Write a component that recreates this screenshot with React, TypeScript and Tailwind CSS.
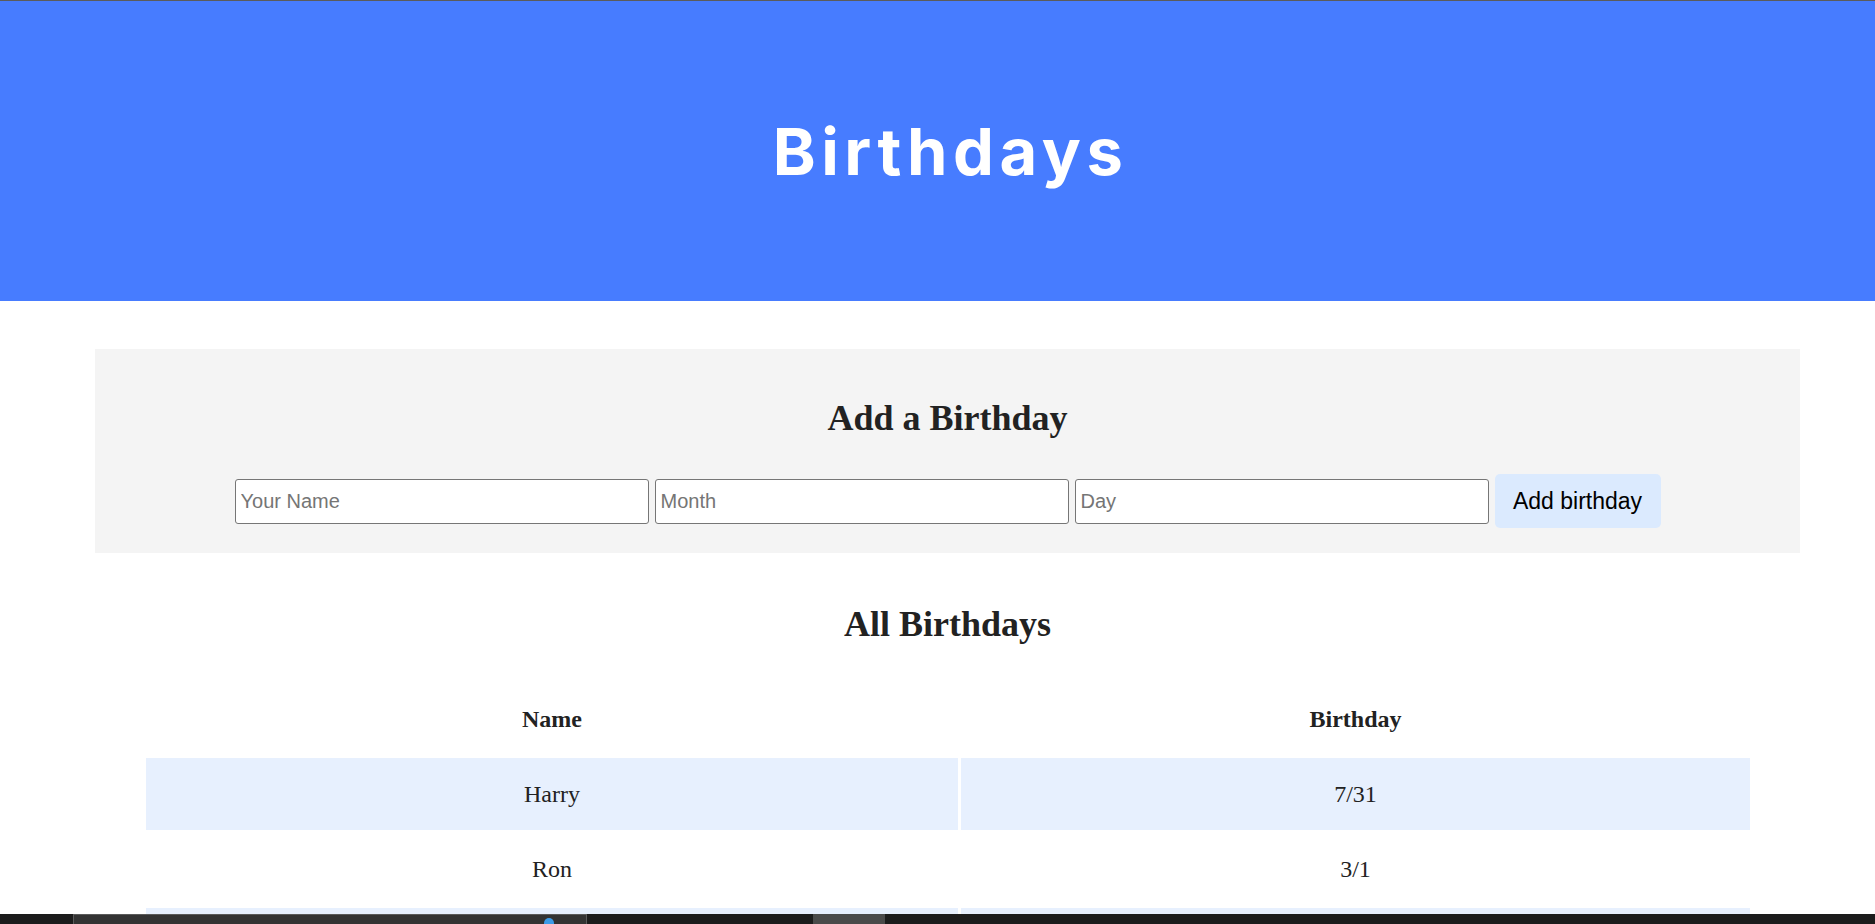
import React from "react";

const birthdays = [
  { name: "Harry", date: "7/31" },
  { name: "Ron", date: "3/1" },
  { name: "Hermione", date: "9/19" },
  { name: "Ginny", date: "8/11" },
];

const serif = "font-['Liberation_Serif','Times_New_Roman',serif]";
const sans = "font-['Liberation_Sans',Arial,sans-serif]";

const App: React.FC = () => {
  return (
    <div className="min-h-screen bg-white border-t border-[#5b5b5b]">
      <header className="h-[300px] bg-[#477cff] flex items-center justify-center pl-[26px]">
        <h1 className="font-['Inter',sans-serif] font-bold text-[65px] tracking-[0.085em] text-white leading-none">
          Birthdays
        </h1>
      </header>

      <main className="pl-[95px] pr-[75px] pt-[48px] pb-10">
        {/* add form */}
        <section className="bg-[#f4f4f4] flex flex-col items-center pt-[49px] pb-[25px]">
          <h2 className={`${serif} font-bold text-[36px] leading-[41px] text-[#222]`}>Add a Birthday</h2>
          <div className="flex items-center gap-[6px] mt-[35px]">
            <input
              type="text"
              placeholder="Your Name"
              className={`${sans} w-[414px] h-[45px] bg-white border border-[#767676] rounded-[3px] px-[5px] text-[20px] placeholder:text-[#757575]`}
            />
            <input
              type="text"
              placeholder="Month"
              className={`${sans} w-[414px] h-[45px] bg-white border border-[#767676] rounded-[3px] px-[5px] text-[20px] placeholder:text-[#757575]`}
            />
            <input
              type="text"
              placeholder="Day"
              className={`${sans} w-[414px] h-[45px] bg-white border border-[#767676] rounded-[3px] px-[5px] text-[20px] placeholder:text-[#757575]`}
            />
            <button
              className={`${sans} w-[166px] h-[54px] bg-[#dbeafe] rounded-[5px] text-[23px] text-black`}
            >
              Add birthday
            </button>
          </div>
        </section>

        {/* list */}
        <section className="flex flex-col items-center pt-[51px]">
          <h2 className={`${serif} font-bold text-[36px] leading-[41px] text-[#222]`}>All Birthdays</h2>
          <div className="w-full pl-[48px] pr-[47px] mt-[35px]">
            <table className={`${serif} w-full border-separate border-spacing-[3px] text-[24px] text-[#222]`}>
              <thead>
                <tr>
                  <th className="h-[72px] w-[812px] font-bold">Name</th>
                  <th className="h-[72px] font-bold">Birthday</th>
                </tr>
              </thead>
              <tbody>
                {birthdays.map((b, i) => (
                  <tr key={b.name} className={i % 2 === 0 ? "bg-[#e7f0fe]" : ""}>
                    <td className="h-[72px] text-center">{b.name}</td>
                    <td className="h-[72px] text-center">{b.date}</td>
                  </tr>
                ))}
              </tbody>
            </table>
          </div>
        </section>
      </main>

      {/* taskbar strip at the bottom of the screen */}
      <div className="fixed bottom-0 left-0 right-0 h-[10px] bg-[#1c1c1c] flex items-end">
        <div className="ml-[73px] w-[514px] h-[10px] bg-[#333] border-t border-x border-[#5a5a5a] relative">
          <span className="absolute top-[3px] left-[470px] w-[10px] h-[6px] rounded-t-full bg-[#3b9be8]" />
        </div>
        <div className="ml-[226px] w-[72px] h-[10px] bg-[#4a4a4a]" />
      </div>
    </div>
  );
};

export default App;
